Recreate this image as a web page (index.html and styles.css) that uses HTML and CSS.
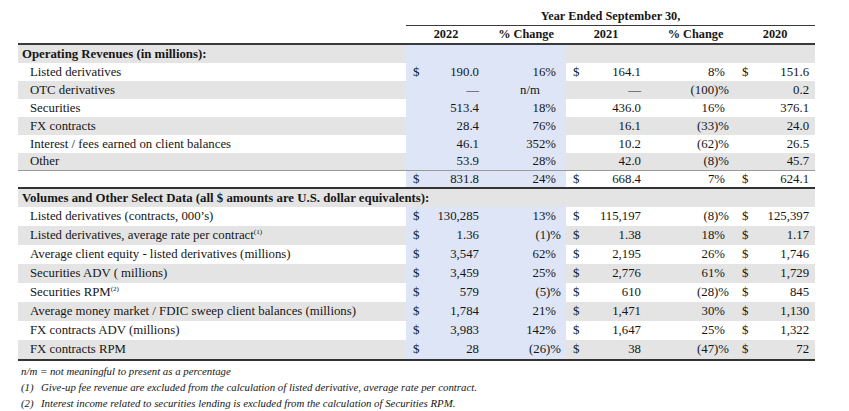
FILE: index.html
```html
<!DOCTYPE html>
<html>
<head>
<meta charset="utf-8">
<link rel="stylesheet" href="styles.css">
</head>
<body>
<table class="fin">
  <colgroup>
    <col class="c-lbl"><col class="c-d"><col class="c-v"><col class="c-p1"><col class="c-d"><col class="c-v"><col class="c-p2"><col class="c-d"><col class="c-v">
  </colgroup>
  <thead>
    <tr class="h1">
      <th></th>
      <th colspan="8" class="ye">Year Ended September 30,</th>
    </tr>
    <tr class="h2">
      <th></th>
      <th colspan="2">2022</th>
      <th>% Change</th>
      <th colspan="2">2021</th>
      <th class="pc2">% Change</th>
      <th colspan="2">2020</th>
    </tr>
  </thead>
  <tbody>
    <tr class="g">
      <td class="sec">Operating Revenues (in millions):</td>
      <td class="b"></td><td class="b"></td><td class="b"></td>
      <td></td><td></td><td></td><td></td><td></td>
    </tr>
    <tr>
      <td class="lbl">Listed derivatives</td>
      <td class="b d">$</td><td class="b v">190.0</td><td class="b p1 pos">16%</td>
      <td class="d">$</td><td class="v v2">164.1</td><td class="p2 pos">8%</td>
      <td class="d">$</td><td class="v v3">151.6</td>
    </tr>
    <tr class="g">
      <td class="lbl">OTC derivatives</td>
      <td class="b d"></td><td class="b v">—</td><td class="b nm">n/m</td>
      <td class="d"></td><td class="v v2">—</td><td class="p2 neg">(100)%</td>
      <td class="d"></td><td class="v v3">0.2</td>
    </tr>
    <tr>
      <td class="lbl">Securities</td>
      <td class="b d"></td><td class="b v">513.4</td><td class="b p1 pos">18%</td>
      <td class="d"></td><td class="v v2">436.0</td><td class="p2 pos">16%</td>
      <td class="d"></td><td class="v v3">376.1</td>
    </tr>
    <tr class="g">
      <td class="lbl">FX contracts</td>
      <td class="b d"></td><td class="b v">28.4</td><td class="b p1 pos">76%</td>
      <td class="d"></td><td class="v v2">16.1</td><td class="p2 neg">(33)%</td>
      <td class="d"></td><td class="v v3">24.0</td>
    </tr>
    <tr>
      <td class="lbl">Interest / fees earned on client balances</td>
      <td class="b d"></td><td class="b v">46.1</td><td class="b p1 pos">352%</td>
      <td class="d"></td><td class="v v2">10.2</td><td class="p2 neg">(62)%</td>
      <td class="d"></td><td class="v v3">26.5</td>
    </tr>
    <tr class="g other">
      <td class="lbl">Other</td>
      <td class="b d"></td><td class="b v">53.9</td><td class="b p1 pos">28%</td>
      <td class="d"></td><td class="v v2">42.0</td><td class="p2 neg">(8)%</td>
      <td class="d"></td><td class="v v3">45.7</td>
    </tr>
    <tr class="total">
      <td class="lbl"></td>
      <td class="b d">$</td><td class="b v">831.8</td><td class="b p1 pos">24%</td>
      <td class="d">$</td><td class="v v2">668.4</td><td class="p2 pos">7%</td>
      <td class="d">$</td><td class="v v3">624.1</td>
    </tr>
    <tr class="g">
      <td class="sec" colspan="9">Volumes and Other Select Data (all $ amounts are U.S. dollar equivalents):</td>
    </tr>
    <tr class="lo">
      <td class="lbl">Listed derivatives (contracts, 000’s)</td>
      <td class="b d">$</td><td class="b v">130,285</td><td class="b p1 pos">13%</td>
      <td class="d">$</td><td class="v v2">115,197</td><td class="p2 neg">(8)%</td>
      <td class="d">$</td><td class="v v3">125,397</td>
    </tr>
    <tr class="lo g">
      <td class="lbl">Listed derivatives, average rate per contract<sup>(1)</sup></td>
      <td class="b d">$</td><td class="b v">1.36</td><td class="b p1 neg">(1)%</td>
      <td class="d">$</td><td class="v v2">1.38</td><td class="p2 pos">18%</td>
      <td class="d">$</td><td class="v v3">1.17</td>
    </tr>
    <tr class="lo">
      <td class="lbl">Average client equity - listed derivatives (millions)</td>
      <td class="b d">$</td><td class="b v">3,547</td><td class="b p1 pos">62%</td>
      <td class="d">$</td><td class="v v2">2,195</td><td class="p2 pos">26%</td>
      <td class="d">$</td><td class="v v3">1,746</td>
    </tr>
    <tr class="lo g">
      <td class="lbl">Securities ADV ( millions)</td>
      <td class="b d">$</td><td class="b v">3,459</td><td class="b p1 pos">25%</td>
      <td class="d">$</td><td class="v v2">2,776</td><td class="p2 pos">61%</td>
      <td class="d">$</td><td class="v v3">1,729</td>
    </tr>
    <tr class="lo">
      <td class="lbl">Securities RPM<sup>(2)</sup></td>
      <td class="b d">$</td><td class="b v">579</td><td class="b p1 neg">(5)%</td>
      <td class="d">$</td><td class="v v2">610</td><td class="p2 neg">(28)%</td>
      <td class="d">$</td><td class="v v3">845</td>
    </tr>
    <tr class="lo g">
      <td class="lbl">Average money market / FDIC sweep client balances (millions)</td>
      <td class="b d">$</td><td class="b v">1,784</td><td class="b p1 pos">21%</td>
      <td class="d">$</td><td class="v v2">1,471</td><td class="p2 pos">30%</td>
      <td class="d">$</td><td class="v v3">1,130</td>
    </tr>
    <tr class="lo">
      <td class="lbl">FX contracts ADV (millions)</td>
      <td class="b d">$</td><td class="b v">3,983</td><td class="b p1 pos">142%</td>
      <td class="d">$</td><td class="v v2">1,647</td><td class="p2 pos">25%</td>
      <td class="d">$</td><td class="v v3">1,322</td>
    </tr>
    <tr class="lo g last">
      <td class="lbl">FX contracts RPM</td>
      <td class="b d">$</td><td class="b v">28</td><td class="b p1 neg">(26)%</td>
      <td class="d">$</td><td class="v v2">38</td><td class="p2 neg">(47)%</td>
      <td class="d">$</td><td class="v v3">72</td>
    </tr>
  </tbody>
</table>
<div class="notes">
  <p class="nm-note">n/m = not meaningful to present as a percentage</p>
  <p class="fn"><span class="fn-n">(1)</span><span>Give-up fee revenue are excluded from the calculation of listed derivative, average rate per contract.</span></p>
  <p class="fn"><span class="fn-n">(2)</span><span>Interest income related to securities lending is excluded from the calculation of Securities RPM.</span></p>
</div>
</body>
</html>
```

FILE: styles.css
```css
html, body {
  margin: 0;
  padding: 0;
  background: #ffffff;
}
body {
  font-family: "Liberation Serif", "Times New Roman", serif;
  color: #161616;
  padding: 8px 0 0 18px;
}
.fin {
  border-collapse: separate;
  border-spacing: 0;
  table-layout: fixed;
  width: 797px;
  font-size: 12.8px;
}
.c-lbl { width: 388px; }
.c-d { width: 20px; }
.c-v { width: 60px; }
.c-p1 { width: 80px; }
.c-p2 { width: 89px; }

.fin th, .fin td {
  padding: 0;
  white-space: nowrap;
  vertical-align: middle;
}
.fin th {
  font-weight: bold;
  font-size: 12.3px;
  text-align: center;
}
.h1 th {
  line-height: 17px;
}
.h1 .ye {
  border-bottom: 1.5px solid #3a3a3a;
}
.h2 th {
  line-height: 17px;
  border-bottom: 2px solid #3a3a3a;
}
.h2 .pc2 { padding-left: 10px; }

.fin td {
  line-height: 18px;
}
.fin tr.lo td {
  line-height: 19px;
}
.g td { background: #e4e4e4; }
.fin td.b { background: #dde5f6; }

.sec {
  font-weight: bold;
  padding-left: 4px !important;
}
.lbl {
  padding-left: 12px !important;
}
.d {
  text-align: left;
  padding-left: 7px !important;
}
.v {
  text-align: right;
  padding-right: 7px !important;
}
.v2 { padding-right: 5px !important; }
.v3 { padding-right: 6px !important; }
.p1, .p2 { text-align: right; }
.p1.pos { padding-right: 10px !important; }
.p1.neg { padding-right: 5px !important; }
.p2.pos { padding-right: 10px !important; }
.p2.neg { padding-right: 6px !important; }
.nm {
  text-align: center;
  padding-left: 8px !important;
}
.other td {
  line-height: 17px;
  border-bottom: 1.5px solid #9a9a9a;
}
.total td {
  line-height: 16px;
  border-bottom: 2px solid #333333;
}
.last td {
  border-bottom: 2px solid #333333;
}
sup {
  font-size: 7px;
  line-height: 0;
  vertical-align: 5px;
}
.notes {
  font-style: italic;
  font-size: 10.8px;
  padding-left: 3px;
  margin-top: 2px;
}
.notes p {
  margin: 0;
  line-height: 16px;
}
.fn {
  display: flex;
}
.fn-n {
  width: 20px;
  flex: none;
}
```
